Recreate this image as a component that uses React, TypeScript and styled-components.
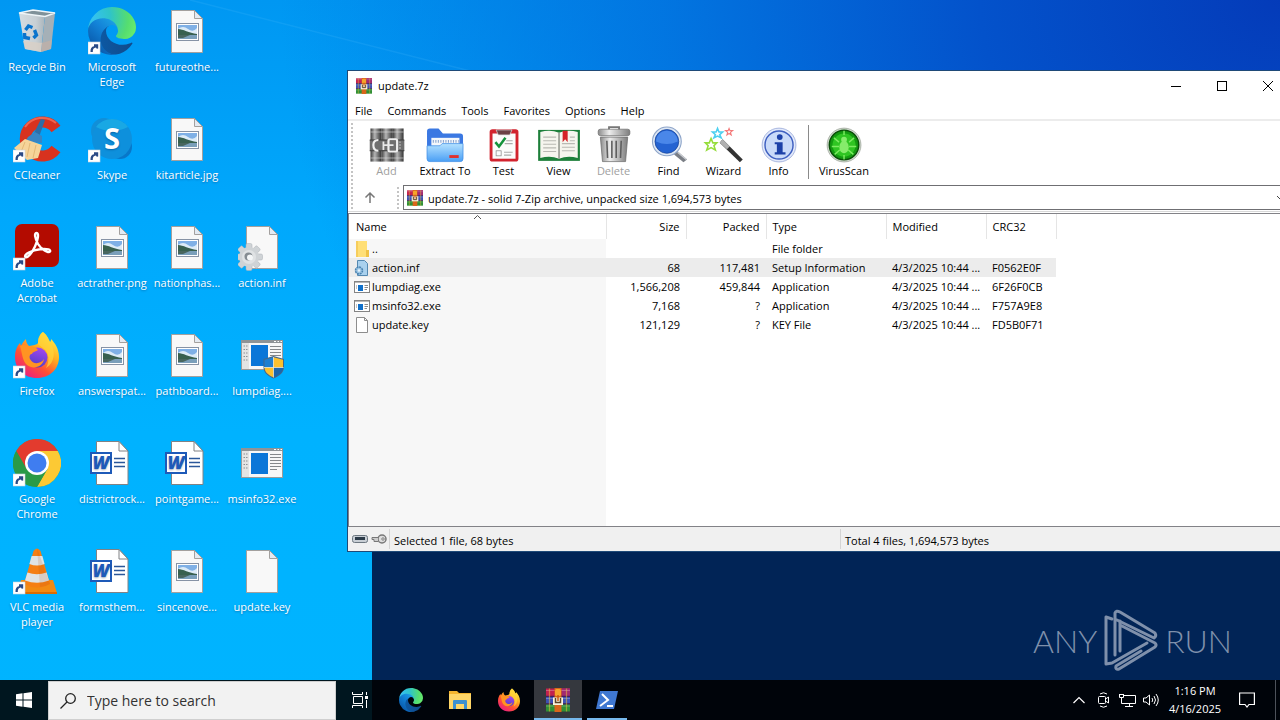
import React from "react";
import styled, { createGlobalStyle } from "styled-components";

const Global = createGlobalStyle`
  * { box-sizing: border-box; }
  body { margin: 0; font-family: "Open Sans", "Noto Sans", sans-serif; font-size: 11px; color: #000; }
  button, input { font: inherit; color: inherit; }
  svg { display: block; flex: none; }
`;

/* ---------- Desktop ---------- */

const Desktop = styled.div`
  position: relative;
  display: flex;
  flex-direction: column;
  min-height: 100vh;
  overflow: hidden;
  background:
    radial-gradient(ellipse 1000px 800px at 100% 0, #043bb9 0%, #0352cb 30%, rgba(2, 112, 222, 0.85) 62%, rgba(0, 150, 245, 0) 100%),
    linear-gradient(180deg, #0097f2 0%, #00a8fc 30%, #00b2ff 60%, #00b4ff 100%);
`;

const Beam = styled.svg`
  position: absolute;
  top: 0;
  left: 190px;
`;

const IconGrid = styled.main`
  position: relative;
  flex: 1;
  display: grid;
  grid-template-columns: repeat(4, 75px);
  grid-template-rows: repeat(6, 108px);
  padding-top: 7px;
`;

const Shortcut = styled.button<{ $col: number; $row: number }>`
  grid-column: ${(p) => p.$col};
  grid-row: ${(p) => p.$row};
  display: flex;
  flex-direction: column;
  align-items: center;
  gap: 4px;
  padding: 0 2px 0 1px;
  border: 0;
  background: none;
  color: #fff;
  line-height: 15px;
  text-align: center;
  text-shadow: 0 1px 2px rgba(0, 40, 90, 0.4);
`;

/* ---------- Windows ---------- */

const ConsoleWindow = styled.div`
  position: absolute;
  left: 372px;
  right: 0;
  top: 100px;
  bottom: 0;
  background: #012456;
`;

const Watermark = styled.div`
  position: absolute;
  right: 48px;
  bottom: 47px;
  display: flex;
  align-items: center;
  gap: 6px;
  color: #7f90ab;
  font-family: Lato, "Liberation Sans", sans-serif;
  font-size: 32px;
  font-weight: 300;
  line-height: 64px;
`;

const ArchiveWindow = styled.section`
  position: absolute;
  left: 347px;
  right: -12px;
  top: 70px;
  display: flex;
  flex-direction: column;
  height: 482px;
  border: 1px solid #1f4a78;
  background: #fff;
`;

const TitleBar = styled.header`
  display: flex;
  align-items: center;
  height: 29px;
  padding-left: 8px;
`;

const Title = styled.h1`
  flex: 1;
  margin: 0 0 0 6px;
  font-size: 11px;
  font-weight: 400;
`;

const CaptionButton = styled.button`
  display: grid;
  place-items: center;
  width: 46px;
  height: 29px;
  padding: 0;
  border: 0;
  background: none;
`;

const MenuBar = styled.nav`
  display: flex;
  gap: 1px;
  height: 21px;
  border-bottom: 2px solid #ececec;
`;

const MenuItem = styled.button`
  padding: 2px 7px 0;
  border: 0;
  background: none;
  line-height: 17px;
`;

const Bars = styled.div`
  display: grid;
  grid-template-columns: 8px 1fr;
  padding-left: 3px;
  border-bottom: 1px solid #d8d8d8;
`;

const Grip = styled.div`
  width: 2px;
  margin: 2px 0 1px;
  background: repeating-linear-gradient(180deg, #c4c4c4 0 2px, #fff 2px 4px);
`;

const Toolbar = styled.div`
  display: flex;
  height: 64px;
  padding-top: 4px;
`;

const Tool = styled.button<{ $wide?: boolean }>`
  display: flex;
  flex-direction: column;
  align-items: center;
  flex: none;
  width: ${(p) => (p.$wide ? 62 : 55)}px;
  padding: 2px 0 0;
  border: 0;
  background: none;
  line-height: 15px;
  color: #000;
  &:disabled { color: #a0a0a0; }
`;

const Divider = styled.div`
  width: 1px;
  height: 54px;
  margin: 0 4px 0 2px;
  background: #8a8a8a;
`;

const AddressRow = styled.div`
  display: flex;
  height: 26px;
  padding-bottom: 1px;
`;

const UpButton = styled.button`
  display: grid;
  place-items: center;
  width: 38px;
  padding: 0 16px 0 0;
  border: 0;
  background: none;
`;

const AddressBox = styled.label`
  display: flex;
  flex: 1;
  align-items: center;
  gap: 5px;
  margin-left: 4px;
  padding: 0 5px 0 3px;
  border: 1px solid #6f6f73;
`;

const AddressInput = styled.input`
  flex: 1;
  min-width: 0;
  padding: 1px 0 0;
  border: 0;
  outline: 0;
  background: none;
`;

const ListPane = styled.div`
  flex: 1;
  margin-top: 1px;
  border: 1px solid #828287;
  border-width: 1px 0 1px 1px;
  background: linear-gradient(90deg, #f7f7f7 257px, #fff 257px);
`;

const FileTable = styled.table`
  table-layout: fixed;
  width: 707px;
  border-collapse: collapse;
`;

const HeadBand = styled.thead`
  background: #fff;
`;

const Head = styled.th<{ $right?: boolean }>`
  position: relative;
  height: 25px;
  padding: 0 6px;
  border-right: 1px solid #e5e5e5;
  font-weight: 400;
  text-align: ${(p) => (p.$right ? "right" : "left")};
  &:first-child { padding-left: 7px; }
`;

const SortMark = styled.svg`
  position: absolute;
  top: 0;
  left: calc(50% - 4px);
`;

const Row = styled.tr<{ $selected?: boolean }>`
  background: ${(p) => (p.$selected ? "#ececec" : "none")};
`;

const Cell = styled.td<{ $right?: boolean }>`
  height: 19px;
  padding: 0 6px;
  line-height: 17px;
  text-align: ${(p) => (p.$right ? "right" : "left")};
  white-space: nowrap;
  &:first-child { padding-left: 5px; }
`;

const FileName = styled.span`
  display: flex;
  align-items: center;
  gap: 2px;
`;

const StatusBar = styled.footer`
  display: flex;
  align-items: center;
  height: 24px;
  background: #f0f0f0;
`;

const StatusPart = styled.div<{ $width?: number }>`
  display: flex;
  align-items: center;
  gap: 3px;
  width: ${(p) => (p.$width ? `${p.$width}px` : "auto")};
  height: 20px;
  padding: 2px 0 0 4px;
  border-right: ${(p) => (p.$width ? "1px solid #d4d4d4" : "0")};
`;

/* ---------- Taskbar ---------- */

const Taskbar = styled.footer`
  position: relative;
  display: flex;
  height: 40px;
  background: rgba(0, 0, 0, 0.88);
  color: #fff;
`;

const TaskButton = styled.button<{ $active?: boolean; $running?: boolean }>`
  position: relative;
  display: grid;
  place-items: center;
  flex: none;
  width: 48px;
  padding: 0;
  border: 0;
  background: ${(p) => (p.$active ? "#35383e" : "none")};
  &::after {
    content: "";
    position: absolute;
    bottom: 0;
    left: ${(p) => (p.$active ? 0 : 4)}px;
    right: ${(p) => (p.$active ? 0 : 4)}px;
    height: ${(p) => (p.$active || p.$running ? 2 : 0)}px;
    background: #76b9ed;
  }
`;

const SearchBox = styled.label`
  display: flex;
  align-items: center;
  gap: 11px;
  width: 288px;
  margin-top: 1px;
  padding-left: 11px;
  border: 1px solid #cfcfcf;
  background: #f2f2f2;
`;

const SearchInput = styled.input`
  flex: 1;
  min-width: 0;
  padding: 0;
  border: 0;
  outline: 0;
  background: none;
  color: #222;
  font-size: 14px;
  &::placeholder { color: #333; opacity: 1; }
`;

const Apps = styled.div`
  display: flex;
  flex: 1;
  gap: 1px;
  padding-left: 3px;
`;

const Tray = styled.div`
  display: flex;
  align-items: stretch;
`;

const TrayButton = styled.button<{ $width: number }>`
  display: grid;
  place-items: center;
  width: ${(p) => p.$width}px;
  padding: 0;
  border: 0;
  background: none;
`;

const Clock = styled.button`
  width: 64px;
  padding: 0;
  border: 0;
  background: none;
  line-height: 18px;
  text-align: center;
`;

const ShowDesktop = styled.button`
  width: 5px;
  margin-left: 8px;
  padding: 0;
  border: 0;
  border-left: 1px solid #4d525a;
  background: none;
`;

/* ---------- Desktop icon art ---------- */

const Link = () => (
  <g>
    <rect x="0" y="35" width="12" height="12" fill="#fff" stroke="#c9d3dc" strokeWidth="0.6" />
    <path d="M2.5 45C2.3 41.5 3.5 39.7 6 39.3V37.3H10.2V41.6L8.8 41.7 7.9 40.6C5.6 41 4.6 42.3 4.8 45Z" fill="#2a4a86" />
  </g>
);

const Art = ({ children, size = 48, link }: { children: React.ReactNode; size?: number; link?: boolean }) => (
  <svg width={size} height={size} viewBox="0 0 48 48" aria-hidden="true">
    {children}
    {link && <Link />}
  </svg>
);

const Page = () => (
  <g>
    <path d="M8.5 3.5H31.5L39.5 11.5V45.5H8.5Z" fill="#f8f8f8" stroke="#a3a09e" />
    <path d="M31.5 3.5V11.5H39.5Z" fill="#e3eaf2" stroke="#a3a09e" />
  </g>
);

const PictureArt = () => (
  <Art>
    <Page />
    <rect x="13.5" y="16.5" width="22" height="17" fill="#fff" stroke="#8793a5" />
    <rect x="15" y="18" width="19" height="14" fill="#7fb0e6" />
    <path d="M15 22Q20 18 25 22T34 21V27H15Z" fill="#dcebf7" />
    <path d="M15 22C20 22 26 26 34 27V28H15Z" fill="#38604f" />
    <path d="M15 28H34V32H15Z" fill="#7a9fba" />
    <path d="M15 28H27L20 31H15Z" fill="#48665e" />
  </Art>
);

const WordArt = () => (
  <Art>
    <path d="M8.5 2.5H31L40 12V45.5H8.5Z" fill="#fff" stroke="#808285" />
    <path d="M31 2.5V12H40Z" fill="#fff" stroke="#808285" />
    <path d="M26 19.5H37M26 23.5H37M26 27.5H37" stroke="#2b579a" strokeWidth="1.3" />
    <rect x="2" y="13" width="22" height="22" fill="#1e5ab8" />
    <rect x="4" y="15" width="18" height="18" fill="#fff" />
    <text x="13" y="30" fontSize="18" fontWeight="800" fontStyle="italic" textAnchor="middle" fill="#1e5ab8" fontFamily="Open Sans, sans-serif">W</text>
  </Art>
);

const Gear = () => (
  <g>
    {[0, 45, 90, 135].map((a) => (
      <rect key={a} x="8" y="20.5" width="6" height="27" rx="1.5" fill="#cfd3d6" stroke="#a9afb4" strokeWidth="0.5" transform={`rotate(${a} 11 34)`} />
    ))}
    <circle cx="11" cy="34" r="10" fill="#cfd3d6" />
    <circle cx="11" cy="34" r="7" fill="#dfe2e4" />
    <circle cx="10.5" cy="33.5" r="4" fill="#858c92" />
    <circle cx="12" cy="34.5" r="3" fill="#f4f6f7" />
  </g>
);

const Program = () => (
  <g>
    <rect x="3.5" y="9.5" width="41" height="29" fill="#f7f7f7" stroke="#9b9b9b" />
    <path d="M3 9H45V12H3Z" fill="#8f9396" />
    <path d="M36 10.5H38M39.5 10.5H41M42.5 10.5H44" stroke="#fff" />
    <path d="M4 12H11V38H4Z" fill="#e4e4e4" />
    <path d="M5.5 15H10M5.5 18.5H10M5.5 22H10M5.5 25.5H10M5.5 29H10" stroke="#8d9196" strokeDasharray="1.5 1" />
    <rect x="13" y="14" width="17" height="21" fill="#0b76d8" />
    <path d="M32 15.5H43M32 18.5H43M32 21.5H43M32 24.5H43M32 27.5H43M32 30.5H39" stroke="#85888b" />
  </g>
);

const Shield = () => (
  <g>
    <path d="M35.5 25L46 28V36C46 41 42 45 35.5 47.5C29 45 25.5 41 25.5 36V28Z" fill="#44678a" />
    <path d="M35.5 26.2V36.5H26.5V28.8Z" fill="#1f7fd0" />
    <path d="M35.5 26.2V36.5H45V28.8Z" fill="#fbc02e" />
    <path d="M26.5 36.5H35.5V46.3C30 44 26.6 41 26.5 36.5Z" fill="#fbc02e" />
    <path d="M45 36.5H35.5V46.3C41 44 45 41 45 36.5Z" fill="#1c66ad" />
    <path d="M35.5 26V46.5M26 36.5H45.500" stroke="#f3ead2" strokeWidth="0.800" />
  </g>
);

const BinArt = () => (
  <Art>
    <defs>
      <linearGradient id="bin" x1="0" x2="1">
        <stop offset="0" stopColor="#d5dde2" />
        <stop offset="0.65" stopColor="#c7cfd4" />
        <stop offset="1" stopColor="#a9b4bb" />
      </linearGradient>
    </defs>
    <path d="M6 6L32 9 28 45 12 42Z" fill="url(#bin)" />
    <path d="M32 9L42 6 38 42 28 45Z" fill="#a5b0b7" />
    <path d="M6 6L20 3 42 6 32 9.5Z" fill="#7f9199" stroke="#eef4f7" strokeWidth="1.4" />
    <path d="M10 34L29 36 28 45 12 42Z" fill="#d9cfc6" opacity="0.8" />
    <path d="M29 36L39 33 38 42 28 45Z" fill="#bfb0a8" opacity="0.8" />
    <g fill="none" stroke="#0a74cc" strokeWidth="3.4">
      <path d="M12.500 23L15.500 19 19.500 20.500" />
      <path d="M21.500 23L23.500 28 20.500 31" />
      <path d="M17 31.500L11.800 30.500 11.500 26" />
    </g>
  </Art>
);

const Edge = () => (
  <g>
    <defs>
      <linearGradient id="edgeA" x1="63" y1="178" x2="241" y2="178" gradientUnits="userSpaceOnUse">
        <stop offset="0" stopColor="#0c59a4" />
        <stop offset="1" stopColor="#114a8b" />
      </linearGradient>
      <linearGradient id="edgeB" x1="157" y1="100" x2="46" y2="221" gradientUnits="userSpaceOnUse">
        <stop offset="0" stopColor="#1b9de2" />
        <stop offset="0.4" stopColor="#1383d8" />
        <stop offset="1" stopColor="#0a5eb0" />
      </linearGradient>
      <radialGradient id="edgeC" cx="30" cy="60" r="235" gradientUnits="userSpaceOnUse">
        <stop offset="0" stopColor="#35c1f1" />
        <stop offset="0.4" stopColor="#2fc4c8" />
        <stop offset="0.8" stopColor="#55dd70" />
        <stop offset="1" stopColor="#66eb6e" />
      </radialGradient>
    </defs>
    <g transform="scale(0.1875) translate(-4.63 -4.92)">
      <path fill="url(#edgeA)" d="M235.68 195.46a93.73 93.73 0 01-10.54 4.71 101.87 101.87 0 01-35.9 6.46c-47.32 0-88.54-32.55-88.54-74.32A31.48 31.48 0 01117.13 105c-42.8 1.8-53.8 46.4-53.8 72.53 0 73.88 68.09 81.37 82.76 81.37 7.91 0 19.84-2.3 27-4.56l1.31-.44a128.34 128.34 0 0066.6-52.8 4 4 0 00-5.32-5.64z" />
      <path fill="url(#edgeB)" d="M110.34 246.34A79.2 79.2 0 0187.6 225a80.72 80.72 0 0129.53-120c3.12-1.47 8.45-4.13 15.54-4a32.35 32.35 0 0125.69 13 31.88 31.88 0 016.36 18.66c0-.21 24.46-79.6-80-79.6-43.9 0-80 41.66-80 78.21a130.15 130.15 0 0012.11 56 128 128 0 00156.38 67.11 75.55 75.55 0 01-62.78-8z" />
      <path fill="url(#edgeC)" d="M156.94 153.78c-.81 1.05-3.3 2.5-3.3 5.66 0 2.61 1.7 5.12 4.72 7.23 14.38 10 41.49 8.68 41.56 8.68a59.56 59.56 0 0030.27-8.35 61.38 61.38 0 0030.43-52.88c.26-22.41-8-37.31-11.34-43.91-21.19-41.45-66.93-65.29-116.67-65.29a128 128 0 00-128 126.2c.48-36.54 36.8-66.05 80-66.05 3.5 0 23.46.34 42 10.07 16.34 8.58 24.9 18.94 30.85 29.21 6.18 10.67 7.28 24.15 7.28 29.52s-2.74 13.33-7.8 19.91z" />
    </g>
  </g>
);

const Firefox = () => (
  <g>
    <defs>
      <linearGradient id="foxA" x1="0.85" y1="0.05" x2="0.2" y2="1">
        <stop offset="0" stopColor="#fff04a" />
        <stop offset="0.35" stopColor="#ffb020" />
        <stop offset="0.65" stopColor="#ff5034" />
        <stop offset="1" stopColor="#e8188a" />
      </linearGradient>
      <linearGradient id="foxB" x1="0.7" y1="0" x2="0.4" y2="1">
        <stop offset="0" stopColor="#a646f0" />
        <stop offset="1" stopColor="#4a3fc8" />
      </linearGradient>
    </defs>
    <path fill="url(#foxA)" d="M30 1C34 4 35 7 37 11C38 10 38 9 38 8C42 12 46 18 46 26C46 38 37 47 24 47C11 47 2 38 2 26C2 20 4 15 7 12L8 15C9 12 11 10 13 8C13 11 14 13 16 15C20 14 24 14 25 12C25 7 27 3 30 1Z" />
    <circle cx="24.5" cy="26.5" r="10" fill="url(#foxB)" />
    <path fill="#ff9422" d="M7 15C10 13 14 14 17 16C20 15.5 23 16 25 19C23 21 20 20 19 23C17 23 16 25 17 28C20 34 28 33 31 28C30 36 20 39 14 34C9 30 9 20 7 15Z" />
    <path fill="#ffd53a" d="M30 1C34 4 35 7 37 11C43 19 42 32 33 37C37 30 36 21 30 17C26 14 24 13 25 12C25 7 27 3 30 1Z" opacity="0.7" />
  </g>
);

const ChromeArt = () => (
  <Art link>
    <circle cx="24" cy="24" r="24" fill="#2ea44f" />
    <path d="M24 24L3.2 12A24 24 0 0 1 44.8 12Z" fill="#e33b2e" />
    <path d="M3.2 12L13.6 30 24 24 24 12Z" fill="#e33b2e" />
    <path d="M44.8 12A24 24 0 0 1 24 48L34.4 30 24 12Z" fill="#fcc934" />
    <path d="M3.2 12A24 24 0 0 0 24 48L34.4 30 13.6 30Z" fill="#2a9a47" />
    <circle cx="24" cy="24" r="12" fill="#fff" />
    <circle cx="24" cy="24" r="9.5" fill="#3f7df0" />
  </Art>
);

const VlcArt = () => (
  <Art link>
    <path d="M8 33H40L44 46H4Z" fill="#f28a12" />
    <path d="M4 45H44V47H4Z" fill="#d96c04" />
    <path d="M20.500 4Q24 -1 27.500 4L37 37Q24 44 11 37Z" fill="#f57f14" />
    <path d="M18.600 9H29.400L31.600 17Q24 20 16.400 17Z" fill="#dfe3e5" />
    <path d="M14.400 25.500Q24 29 33.600 25.500L36 33.500Q24 38 12 33.500Z" fill="#dfe3e5" />
    <path d="M24 1L37 37Q32 40 27 40Z" fill="#b84a00" opacity="0.150" />
  </Art>
);

const AdobeArt = () => (
  <Art link>
    <rect x="2" y="1" width="44" height="43" rx="7" fill="#b30b00" />
    <path d="M12.500 34C10 32 19 27 27 26.200C35 25.300 38 27 37 28.500C35.500 31 28 26 25 21C22 15.500 21 10 23.500 10C26.200 10 25 17 22 23.500C19 30 14.500 35.500 12.500 34Z" fill="none" stroke="#fff" strokeWidth="2.400" />
  </Art>
);

const CCleanerArt = () => (
  <Art link>
    <path d="M43 14A17 17 0 1 0 43 34" fill="none" stroke="#d8321f" strokeWidth="11" />
    <path d="M43 8A21 21 0 0 0 12 12" fill="none" stroke="#ee6450" strokeWidth="2" />
    <path d="M28 4L32 5 26 22 20 20Z" fill="#2d6da6" />
    <path d="M15 22L22 17 29 21 29 28 12 27Z" fill="#3785c4" />
    <path d="M12 24L29 30 25 43 14 45 1 33Z" fill="#f6d499" />
    <path d="M12 27L8 37M17 28L14 42M23 30L20 43" stroke="#e3b876" />
  </Art>
);

const SkypeArt = () => (
  <Art link>
    <circle cx="16" cy="16" r="13" fill="#118fd8" />
    <circle cx="32" cy="32" r="12" fill="#0877c9" />
    <circle cx="24" cy="24" r="20" fill="#0e90dc" />
    <path d="M8 12A20 20 0 0 1 40 12Q24 20 8 12Z" fill="#19a8e4" />
    <text x="24" y="34" fontSize="29" fontWeight="700" textAnchor="middle" fill="#fff" fontFamily="Open Sans, sans-serif">S</text>
  </Art>
);

const Books = () => (
  <g>
    <rect x="0" y="1" width="48" height="15" fill="#c2214f" />
    <rect x="31" y="1" width="17" height="15" fill="#a02a72" />
    <rect x="0" y="17" width="48" height="14" fill="#3c50b4" />
    <rect x="0" y="32" width="48" height="15" fill="#2f8f35" />
    <path d="M0 5H48M0 21H48M0 36H48" stroke="#fff" strokeWidth="2" opacity="0.25" />
    <path d="M0 16.500H48M0 31.500H48" stroke="#43205c" strokeWidth="2.500" />
    <path d="M7 1V47M41 1V47" stroke="#f3c63a" strokeWidth="2.500" opacity="0.500" />
    <rect x="17" y="0" width="14" height="48" fill="#d9651a" />
    <rect x="18" y="2" width="12" height="14" rx="3" fill="#f5a52c" />
    <path d="M14 19H34V34H14Z" fill="#fbf3dc" />
    <path d="M19 20V29H29V20" fill="none" stroke="#5c4526" strokeWidth="3" />
    <path d="M24 14V26" stroke="#c65a12" strokeWidth="3" />
  </g>
);

/* ---------- Toolbar icon art ---------- */

const toolArt: Record<string, React.ReactNode> = {
  Add: (
    <g>
      <defs>
        <linearGradient id="spine" x1="0" x2="1">
          <stop offset="0" stopColor="#3c3c3c" />
          <stop offset="0.4" stopColor="#b4b4b4" />
          <stop offset="1" stopColor="#333" />
        </linearGradient>
      </defs>
      <rect x="1" y="1" width="15" height="46" fill="url(#spine)" />
      <rect x="16" y="1" width="16" height="46" fill="url(#spine)" />
      <rect x="32" y="1" width="15" height="46" fill="url(#spine)" />
      <path d="M1 6H47M1 42H47" stroke="#ddd" strokeWidth="1.500" opacity="0.600" />
      <rect x="0" y="17" width="48" height="15" fill="#6f6f6f" />
      <path d="M0 17H48M0 32H48" stroke="#3c3c3c" strokeWidth="1.500" />
      <path d="M12 17Q5 17 5 24Q5 32 12 32" fill="none" stroke="#efefef" strokeWidth="3" />
      <rect x="26" y="16" width="12" height="17" rx="2" fill="none" stroke="#efefef" strokeWidth="3" />
      <path d="M19 19V31M20 24H33" stroke="#e8e8e8" strokeWidth="2.500" />
      <path d="M42 19V30" stroke="#bbb" strokeWidth="2" strokeDasharray="2 2" />
    </g>
  ),
  "Extract To": (
    <g>
      <defs>
        <linearGradient id="folderFace" x1="0" y1="0" x2="0" y2="1">
          <stop offset="0" stopColor="#b5e2ff" />
          <stop offset="1" stopColor="#4a9ff5" />
        </linearGradient>
      </defs>
      <path d="M-1 5Q-1 1 3 1H15L21 8H45Q49 8 49 12V30H-1Z" fill="#3b78e2" />
      <path d="M5 14H44V28H5Z" fill="#f4f7fb" />
      <path d="M7 19H43" stroke="#8aa6d0" strokeWidth="4" strokeDasharray="1.500 2" />
      <path d="M-1 25H17L20 22H49V43Q49 47 45 47H3Q-1 47 -1 43Z" fill="url(#folderFace)" stroke="#3c8be6" />
      <rect x="30" y="38" width="13" height="4" fill="#e0322f" />
    </g>
  ),
  Test: (
    <g>
      <rect x="4" y="2" width="40" height="45" rx="4" fill="#d2232e" />
      <rect x="8" y="8" width="32" height="35" fill="#fbfbfb" />
      <path d="M13 3H35L32 10H16Z" fill="#6c4146" stroke="#ddd" />
      <path d="M12 20L17 26 26 14" fill="none" stroke="#15923c" strokeWidth="3.500" />
      <rect x="13" y="32" width="7" height="7" fill="none" stroke="#888" />
      <path d="M25 22H36M27 18H36M24 34H36M24 38H34" stroke="#aaa" strokeWidth="1.500" />
    </g>
  ),
  View: (
    <g>
      <rect x="-5" y="3" width="58" height="43" fill="#1d7f3a" />
      <path d="M-2 6Q12 2 24 7Q36 2 50 6V42Q36 38 24 43Q12 38 -2 42Z" fill="#f6f5ee" />
      <path d="M24 7V43" stroke="#8b8f86" strokeWidth="2" />
      <path d="M2 13H20M2 18H20M2 23H20M2 28H20M2 33H20M28 22H46M28 27H46M28 32H46M39 13H46M39 18H46" stroke="#b9b9b3" strokeWidth="1.500" />
      <path d="M29 4H36V20L32.500 16 29 20Z" fill="#d62328" />
    </g>
  ),
  Delete: (
    <g>
      <defs>
        <linearGradient id="can" x1="0" x2="1">
          <stop offset="0" stopColor="#8a8a8a" />
          <stop offset="0.35" stopColor="#ededed" />
          <stop offset="1" stopColor="#7d7d7d" />
        </linearGradient>
      </defs>
      <path d="M17 3V-1H31V3" fill="none" stroke="#777" strokeWidth="2.500" />
      <path d="M5 13H43L40 47H8Z" fill="url(#can)" stroke="#686868" />
      <path d="M14 18L15 42M21 18V42M27 18V42M34 18L33 42" stroke="#5e5e5e" strokeWidth="2.200" />
      <rect x="2" y="2" width="44" height="9" rx="3" fill="url(#can)" stroke="#6e6e6e" />
    </g>
  ),
  Find: (
    <g>
      <path d="M35 32L49 44 44 48 31 37Z" fill="#7b7f86" />
      <path d="M36 34L48 44" stroke="#c9ccd1" strokeWidth="2" />
      <circle cx="21" cy="19" r="20" fill="#dfe8f4" stroke="#8ea5c9" strokeWidth="1.500" />
      <circle cx="21" cy="19" r="16.500" fill="#2463d2" stroke="#123f95" />
      <path d="M6 19A15 15 0 0 1 36 19Q21 26 6 19Z" fill="#5b97f2" opacity="0.700" />
    </g>
  ),
  Wizard: (
    <g fill="none" strokeWidth="2.200">
      <path d="M22 16L50 44 46 48 18 21Z" fill="#333" />
      <path d="M22 16L32 26 28 30 18 21Z" fill="#b0b0b0" />
      <path d="M15 1L17 6 22 6 18 9.500 20 14 15 11.500 10 14 12 9.500 8 6 13 6Z" stroke="#4dd0f0" />
      <path d="M6 15L8.500 21 14 21 10 25 12 31 6 27.500 0 31 2 25 -2 21 3.500 21Z" stroke="#96dd3c" />
      <path d="M31 1L32.300 4 36 4 33 6.500 34 10 31 8 28 10 29 6.500 26 4 29.700 4Z" stroke="#f47a7a" strokeWidth="1.500" />
    </g>
  ),
  Info: (
    <g>
      <circle cx="24" cy="24" r="23.500" fill="#e3eafb" stroke="#8ea0d4" />
      <circle cx="24" cy="24" r="19.500" fill="#c9daf9" stroke="#3e5fc0" strokeWidth="2" />
      <circle cx="25" cy="13" r="4" fill="#1d41a8" />
      <path d="M18 20H29V34H33V37H18V34H21V23H18Z" fill="#1d41a8" />
    </g>
  ),
  VirusScan: (
    <g>
      <circle cx="24" cy="24" r="23.500" fill="#d6dfd3" stroke="#959d92" />
      <circle cx="24" cy="24" r="20.500" fill="#139a10" stroke="#0b4e0a" strokeWidth="2" />
      <circle cx="24" cy="24" r="16" fill="#2fc522" />
      <g stroke="#7deb62" strokeWidth="2" fill="none">
        <path d="M10 14L17 20M38 14L31 20M7 26H17M41 26H31M11 37L18 31M37 37L30 31M24 4V10M24 38V44" />
      </g>
      <ellipse cx="24" cy="27" rx="6.500" ry="8.500" fill="#86ec6b" />
      <circle cx="24" cy="16.500" r="4" fill="#86ec6b" />
    </g>
  ),
};

const ToolIcon = ({ name }: { name: string }) => (
  <svg width="36" height="36" viewBox="0 0 48 48" overflow="visible" aria-hidden="true">
    <g transform="translate(1 1) scale(0.96)">{toolArt[name]}</g>
  </svg>
);

/* ---------- Small file icons ---------- */

const SmallIcon = ({ kind }: { kind: string }) => (
  <svg width="16" height="16" viewBox="0 0 16 16" aria-hidden="true">
    {kind === "folder" && (
      <g>
        <path d="M2 0H13V9L14 10V16H2Z" fill="#ffdf76" />
        <path d="M2 0H4V16H2Z" fill="#f6cd5c" />
        <path d="M12 9H15V16H12Z" fill="#f0c245" />
      </g>
    )}
    {kind === "inf" && (
      <g>
        <path d="M3.5 .5H10.5L13.5 3.5V15.5H3.5Z" fill="#a9d1ee" stroke="#5488b0" />
        <circle cx="5" cy="10.5" r="3.5" fill="#9cc5e4" stroke="#4a83b0" strokeWidth="1.5" strokeDasharray="2 0.7" />
        <circle cx="5" cy="10.5" r="1.2" fill="#e6f3fb" />
      </g>
    )}
    {kind === "exe" && (
      <g>
        <rect x=".5" y="2.5" width="15" height="11" fill="#fff" stroke="#848484" />
        <path d="M1 3H15V4H1Z" fill="#b8b8b8" />
        <rect x="4" y="6" width="5" height="6" fill="#0f6fc9" />
        <path d="M2 7H3M2 9H3M10.5 6.5H14M10.5 8.5H14M10.5 10.5H13" stroke="#8a8a8a" />
      </g>
    )}
    {kind === "key" && (
      <g>
        <path d="M2.5 .5H10.5L13.5 3.5V15.5H2.5Z" fill="#fff" stroke="#8d8d8d" />
        <path d="M10.5 .5V3.5H13.5" fill="none" stroke="#8d8d8d" />
      </g>
    )}
  </svg>
);

/* ---------- Data ---------- */

const shortcuts: { col: number; row: number; label: string; art: React.ReactNode }[] = [
  { col: 1, row: 1, label: "Recycle Bin", art: <BinArt /> },
  { col: 1, row: 2, label: "CCleaner", art: <CCleanerArt /> },
  { col: 1, row: 3, label: "Adobe Acrobat", art: <AdobeArt /> },
  { col: 1, row: 4, label: "Firefox", art: <Art link><Firefox /></Art> },
  { col: 1, row: 5, label: "Google Chrome", art: <ChromeArt /> },
  { col: 1, row: 6, label: "VLC media player", art: <VlcArt /> },
  { col: 2, row: 1, label: "Microsoft Edge", art: <Art link><Edge /></Art> },
  { col: 2, row: 2, label: "Skype", art: <SkypeArt /> },
  { col: 2, row: 3, label: "actrather.png", art: <PictureArt /> },
  { col: 2, row: 4, label: "answerspat...", art: <PictureArt /> },
  { col: 2, row: 5, label: "districtrock...", art: <WordArt /> },
  { col: 2, row: 6, label: "formsthem...", art: <WordArt /> },
  { col: 3, row: 1, label: "futureothe...", art: <PictureArt /> },
  { col: 3, row: 2, label: "kitarticle.jpg", art: <PictureArt /> },
  { col: 3, row: 3, label: "nationphas...", art: <PictureArt /> },
  { col: 3, row: 4, label: "pathboard...", art: <PictureArt /> },
  { col: 3, row: 5, label: "pointgame...", art: <WordArt /> },
  { col: 3, row: 6, label: "sincenove...", art: <PictureArt /> },
  { col: 4, row: 3, label: "action.inf", art: <Art><Page /><Gear /></Art> },
  { col: 4, row: 4, label: "lumpdiag....", art: <Art><Program /><Shield /></Art> },
  { col: 4, row: 5, label: "msinfo32.exe", art: <Art><Program /></Art> },
  { col: 4, row: 6, label: "update.key", art: <Art><Page /></Art> },
];

const tools = ["Add", "Extract To", "Test", "View", "Delete", "Find", "Wizard", "Info"];

const columnWidths = [257, 80, 80, 120, 100, 70];

const files = [
  { icon: "folder", name: "..", size: "", packed: "", type: "File folder", date: "", crc: "" },
  { icon: "inf", name: "action.inf", size: "68", packed: "117,481", type: "Setup Information", date: "4/3/2025 10:44 ...", crc: "F0562E0F" },
  { icon: "exe", name: "lumpdiag.exe", size: "1,566,208", packed: "459,844", type: "Application", date: "4/3/2025 10:44 ...", crc: "6F26F0CB" },
  { icon: "exe", name: "msinfo32.exe", size: "7,168", packed: "?", type: "Application", date: "4/3/2025 10:44 ...", crc: "F757A9E8" },
  { icon: "key", name: "update.key", size: "121,129", packed: "?", type: "KEY File", date: "4/3/2025 10:44 ...", crc: "FD5B0F71" },
];

const Archiver = () => (
  <ArchiveWindow aria-label="Archive">
    <TitleBar>
      <Art size={16}><Books /></Art>
      <Title>update.7z</Title>
      <CaptionButton aria-label="Minimize">
        <svg width="10" height="10"><path d="M0 5.5H10" stroke="#000" /></svg>
      </CaptionButton>
      <CaptionButton aria-label="Maximize">
        <svg width="10" height="10"><rect x=".5" y=".5" width="9" height="9" fill="none" stroke="#000" /></svg>
      </CaptionButton>
      <CaptionButton aria-label="Close">
        <svg width="10" height="10"><path d="M0 0L10 10M10 0L0 10" stroke="#000" /></svg>
      </CaptionButton>
    </TitleBar>
    <MenuBar>
      {["File", "Commands", "Tools", "Favorites", "Options", "Help"].map((m) => (
        <MenuItem key={m}>{m}</MenuItem>
      ))}
    </MenuBar>
    <Bars>
      <Grip />
      <div>
        <Toolbar>
          {tools.map((t) => (
            <Tool key={t} $wide={t === "Extract To"} disabled={t === "Add" || t === "Delete"}>
              <ToolIcon name={t} />
              {t}
            </Tool>
          ))}
          <Divider />
          <Tool $wide>
            <ToolIcon name="VirusScan" />
            VirusScan
          </Tool>
        </Toolbar>
        <AddressRow>
          <UpButton aria-label="Up one level">
            <svg width="16" height="16" fill="none" stroke="#777" strokeWidth="1.5">
              <path d="M8 13V3M3.5 7.5L8 3 12.5 7.5" />
            </svg>
          </UpButton>
          <Grip />
          <AddressBox>
            <Art size={16}><Books /></Art>
            <AddressInput aria-label="Path" readOnly value="update.7z - solid 7-Zip archive, unpacked size 1,694,573 bytes" />
            <svg width="8" height="8" fill="none" stroke="#444"><path d="M0 2L4 6 8 2" /></svg>
          </AddressBox>
        </AddressRow>
      </div>
    </Bars>
    <ListPane>
      <FileTable>
        <colgroup>
          {columnWidths.map((w, i) => (
            <col key={i} width={w} />
          ))}
        </colgroup>
        <HeadBand>
          <tr>
            <Head>
              Name
              <SortMark width="9" height="6" fill="none" stroke="#555"><path d="M1 5L4.5 1.5 8 5" /></SortMark>
            </Head>
            <Head $right>Size</Head>
            <Head $right>Packed</Head>
            <Head>Type</Head>
            <Head>Modified</Head>
            <Head>CRC32</Head>
          </tr>
        </HeadBand>
        <tbody>
          {files.map((f) => (
            <Row key={f.name} $selected={f.icon === "inf"}>
              <Cell><FileName><SmallIcon kind={f.icon} />{f.name}</FileName></Cell>
              <Cell $right>{f.size}</Cell>
              <Cell $right>{f.packed}</Cell>
              <Cell>{f.type}</Cell>
              <Cell>{f.date}</Cell>
              <Cell>{f.crc}</Cell>
            </Row>
          ))}
        </tbody>
      </FileTable>
    </ListPane>
    <StatusBar>
      <StatusPart $width={42}>
        <svg width="16" height="14"><rect x=".5" y="2.5" width="15" height="7" rx="2" fill="#c8ced4" stroke="#6d7780" /><rect x="3" y="4" width="10" height="3" fill="#2c3a48" /></svg>
        <svg width="16" height="14" fill="none" stroke="#777"><circle cx="11" cy="6" r="4" fill="#ddd" strokeWidth="1.5" /><circle cx="12" cy="6" r="1.2" fill="#fff" /><path d="M7 4.5H1V6.5H3V8.5H7" fill="#ccc" /></svg>
      </StatusPart>
      <StatusPart $width={451}>Selected 1 file, 68 bytes</StatusPart>
      <StatusPart>Total 4 files, 1,694,573 bytes</StatusPart>
    </StatusBar>
  </ArchiveWindow>
);

export default function App() {
  return (
    <Desktop>
      <Global />
      <Beam width="300" height="80" aria-hidden="true">
        <path d="M0 0L300 76" stroke="#5cc4ff" strokeWidth="1.5" opacity="0.15" />
      </Beam>
      <ConsoleWindow>
        <Watermark>
          <span>ANY</span>
          <svg width="56" height="64" viewBox="0 0 56 64" fill="none" stroke="#7f90ab" strokeWidth="3" strokeLinejoin="round" strokeLinecap="round">
            <path d="M9 10L3 8V55L9 54 44 34" />
            <path d="M12 46V4Q13 1 17 3L52 24Q54 27 51 29L14 11" />
            <path d="M17 12V42M17 16L52 34Q54 36 52 38L16 60Q12 61 13 57L38 42" />
          </svg>
          <span>RUN</span>
        </Watermark>
      </ConsoleWindow>
      <IconGrid>
        {shortcuts.map((s) => (
          <Shortcut key={s.label} $col={s.col} $row={s.row}>
            {s.art}
            {s.label}
          </Shortcut>
        ))}
      </IconGrid>
      <Archiver />
      <Taskbar>
        <TaskButton aria-label="Start">
          <svg width="16" height="16" fill="#fff"><path d="M0 2.2L6.5 1.3V7.5H0ZM7.5 1.2L16 0V7.5H7.5ZM0 8.5H6.5V14.7L0 13.8ZM7.5 8.5H16V16L7.5 14.8Z" /></svg>
        </TaskButton>
        <SearchBox>
          <svg width="16" height="16" fill="none" stroke="#222" strokeWidth="1.3"><circle cx="10.5" cy="5.5" r="4.8" /><path d="M7 9L0.5 15.5" /></svg>
          <SearchInput placeholder="Type here to search" aria-label="Search" />
        </SearchBox>
        <TaskButton aria-label="Task view">
          <svg width="17" height="16" fill="none" stroke="#fff"><path d="M.5 0V2.5H10.5V0M.5 16V13.5H10.5V16M1.5 4.5H10.5V11.5H1.5ZM14.5 0V3M14.5 8V16" /><rect x="13" y="4" width="3" height="3" fill="#fff" stroke="none" /></svg>
        </TaskButton>
        <Apps>
          <TaskButton aria-label="Edge"><Art size={24}><Edge /></Art></TaskButton>
          <TaskButton aria-label="File Explorer">
            <svg width="22" height="20" viewBox="0 0 22 20"><path d="M0 1H8L10 3H22V19H0Z" fill="#f5b52e" /><path d="M0 4H22V19H0Z" fill="#ffd667" /><path d="M4 19V11Q4 10 5 10H17Q18 10 18 11V19H15V14H7V19Z" fill="#3c90cf" /></svg>
          </TaskButton>
          <TaskButton aria-label="Firefox"><Art size={24}><Firefox /></Art></TaskButton>
          <TaskButton aria-label="WinRAR" $active><Art size={24}><Books /></Art></TaskButton>
          <TaskButton aria-label="PowerShell" $running>
            <svg width="24" height="20" viewBox="0 0 24 20"><path d="M5 1H23L19 19H1Z" fill="#3f78d2" /><path d="M7 4L13 10 5 16M12 16H18" fill="none" stroke="#fff" strokeWidth="2" /></svg>
          </TaskButton>
        </Apps>
        <Tray>
          <TrayButton $width={24} aria-label="Show hidden icons">
            <svg width="12" height="8" fill="none" stroke="#fff" strokeWidth="1.2"><path d="M.5 7L6 1.5 11.5 7" /></svg>
          </TrayButton>
          <TrayButton $width={24} aria-label="Meet now">
            <svg width="13" height="16" fill="none" stroke="#fff"><rect x="1.5" y="4.5" width="7" height="7" rx="1" /><path d="M8.5 7L11.5 5V11L8.5 9M3 2Q6.5 -.5 10 2M3 14Q6.5 16.5 10 14" /></svg>
          </TrayButton>
          <TrayButton $width={24} aria-label="Network">
            <svg width="17" height="14" fill="none" stroke="#fff"><path d="M5 2.5H16.5V10.5H6M10.5 10.5V13M6 13.5H14M.5 1V4.5H4.5V1M2.5 4.5V10.500H6M0 1.5H5" /></svg>
          </TrayButton>
          <TrayButton $width={24} aria-label="Volume">
            <svg width="17" height="14" fill="none" stroke="#fff"><path d="M.5 5H3L6.5 2V12L3 9H.5ZM9 5Q10.5 7 9 9M11 3Q14 7 11 11M13 1Q17.5 7 13 13" /></svg>
          </TrayButton>
          <Clock>1:16 PM<br />4/16/2025</Clock>
          <TrayButton $width={40} aria-label="Notifications">
            <svg width="16" height="16" fill="none" stroke="#fff" strokeWidth="1.2"><path d="M.6 1H15.4V12.5H10L8 15 6 12.5H.6Z" /></svg>
          </TrayButton>
          <ShowDesktop aria-label="Show desktop" />
        </Tray>
      </Taskbar>
    </Desktop>
  );
}
